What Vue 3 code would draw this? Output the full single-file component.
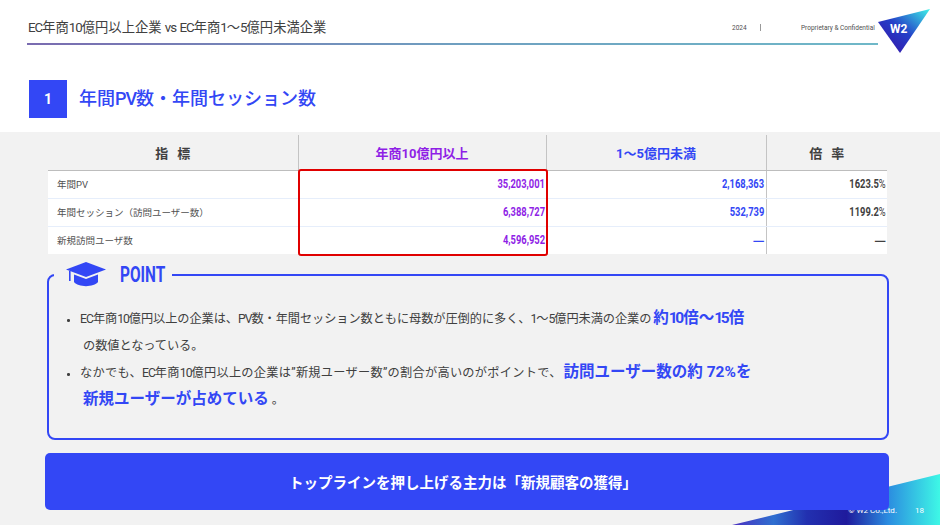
<script setup>
const rows = [
  { label: '年間PV', a: '35,203,001', b: '2,168,363', c: '1623.5', unit: '%' },
  { label: '年間セッション（訪問ユーザー数）', a: '6,388,727', b: '532,739', c: '1199.2', unit: '%' },
  { label: '新規訪問ユーザ数', a: '4,596,952', b: '—', c: '—', unit: '' }
]
const numClass = (v) => (v === '—' ? 'dash' : 'sq')
</script>

<template>
  <div class="slide">
    <header class="topbar">
      <div class="topbar-line">
        <h1 class="doc-title"><span class="lat">EC</span>年商<span class="lat">10</span>億円以上企業 <span class="lat">vs</span> <span class="lat">EC</span>年商<span class="lat">1</span>〜<span class="lat">5</span>億円未満企業</h1>
        <div class="meta">
          <span class="year">2024</span>
          <span class="sep"></span>
          <span class="conf">Proprietary &amp; Confidential</span>
        </div>
      </div>
      <svg class="logo" width="54" height="46" viewBox="0 0 54 46">
        <defs>
          <linearGradient id="lg" x1="0" y1="1" x2="1" y2="0">
            <stop offset="0" stop-color="#3a0ca3" />
            <stop offset="0.5" stop-color="#2440c8" />
            <stop offset="1" stop-color="#3ef3e8" />
          </linearGradient>
        </defs>
        <polygon points="0,13 52,0 22,44" fill="url(#lg)" />
        <text x="12" y="24" class="logo-text">W2</text>
      </svg>
    </header>

    <section class="heading">
      <div class="num">1</div>
      <h2 class="heading-text">年間<span class="lat">PV</span>数・年間セッション数</h2>
    </section>

    <main class="panel">
      <svg class="swoosh" width="220" height="70" viewBox="0 0 220 70" preserveAspectRatio="none">
        <defs>
          <linearGradient id="sw" x1="0" y1="0" x2="1" y2="0">
            <stop offset="0" stop-color="#4b2fc0" />
            <stop offset="0.2" stop-color="#2f6fd0" />
            <stop offset="0.36" stop-color="#2230b0" />
            <stop offset="0.55" stop-color="#1f1a9c" />
            <stop offset="0.75" stop-color="#2b8ce0" />
            <stop offset="1" stop-color="#3ef8e6" />
          </linearGradient>
        </defs>
        <polygon points="12,70 220,19 220,70" fill="url(#sw)" />
      </svg>
      <div class="foot">
        <span class="copy">© W2 Co.,Ltd.</span>
        <span class="page">18</span>
      </div>

      <table class="data">
        <colgroup>
          <col class="c1" /><col class="c2" /><col class="c3" /><col class="c4" />
        </colgroup>
        <thead>
          <tr>
            <th class="gray">指 標</th>
            <th class="purple">年商10億円以上</th>
            <th class="blue">1〜5億円未満</th>
            <th class="gray">倍 率</th>
          </tr>
        </thead>
        <tbody>
          <tr v-for="r in rows" :key="r.label">
            <td class="lbl">{{ r.label }}</td>
            <td class="n purple"><span class="sq">{{ r.a }}</span></td>
            <td class="n blue"><span :class="numClass(r.b)">{{ r.b }}</span></td>
            <td class="n dark"><span :class="numClass(r.c)">{{ r.c }}<span class="unit">{{ r.unit }}</span></span></td>
          </tr>
        </tbody>
      </table>
      <div class="redbox"></div>

      <div class="point">
        <div class="point-head">
          <svg width="42" height="26" viewBox="0 0 42 26">
            <path d="M21 1 L41 8.5 L21 16 L1 8.5 Z" fill="#3347f5" />
            <path d="M9 13.5 L21 18 L33 13.5 V21 C29 26.5 13 26.5 9 21 Z" fill="#3347f5" />
            <rect x="4" y="10" width="1.6" height="10" fill="#3347f5" />
          </svg>
          <span class="point-title"><span class="pt-in">POINT</span></span>
        </div>
        <ul class="points">
          <li>
            <div class="ln"><span class="lat">EC</span>年商<span class="lat">10</span>億円以上の企業は、<span class="lat">PV</span>数・年間セッション数ともに母数が圧倒的に多く、<span class="lat">1</span>〜<span class="lat">5</span>億円未満の企業の<b class="em">約<span class="lat2">10</span>倍〜<span class="lat2">15</span>倍</b></div>
            <div class="ln cont">の数値となっている。</div>
          </li>
          <li>
            <div class="ln loose">なかでも、<span class="lat">EC</span>年商<span class="lat">10</span>億円以上の企業は”新規ユーザー数”の割合が高いのがポイントで、<b class="em">訪問ユーザー数の約 72%を</b></div>
            <div class="ln cont"><b class="em">新規ユーザーが占めている</b> 。</div>
          </li>
        </ul>
      </div>

      <div class="cta">トップラインを押し上げる主力は「新規顧客の獲得」</div>
    </main>
  </div>
</template>

<style scoped>
.slide {
  width: 940px;
  height: 525px;
  overflow: hidden;
  background: #fff;
  display: flex;
  flex-direction: column;
  font-family: Roboto, "Noto Sans CJK JP", sans-serif;
  color: #404040;
}
.lat { letter-spacing: -1px; }
.lat2 { letter-spacing: -2.4px; margin-right: 1.5px; }
.topbar {
  height: 56px;
  padding: 0 10px 0 27px;
  display: flex;
  position: relative;
}
.topbar-line {
  width: 851px;
  height: 45px;
  border-bottom: 2px solid;
  border-image: linear-gradient(90deg, #7a6bb0, #6f9fc0 50%, #6fb8c8) 1;
  display: flex;
  justify-content: space-between;
  align-items: center;
  padding-top: 9px;
  box-sizing: border-box;
}
.doc-title {
  margin: 0;
  font-size: 13.3px;
  font-weight: 400;
  color: #404040;
  padding-left: 1px;
}
.meta {
  display: flex;
  align-items: center;
  font-size: 6.5px;
  color: #505050;
  padding-right: 5px;
  padding-top: 3px;
}
.year { width: 28px; }
.sep { width: 1px; height: 7px; background: #999; margin-right: 40px; }
.conf { width: 72px; white-space: nowrap; }
.logo { position: absolute; left: 878px; top: 9px; }
.logo-text { font: 700 12px Roboto, sans-serif; fill: #fff; }
.heading {
  height: 76px;
  padding: 24px 0 0 29px;
  box-sizing: border-box;
  display: flex;
  gap: 12px;
}
.num {
  width: 38px;
  height: 38px;
  background: #3347f5;
  color: #fff;
  font-weight: 700;
  font-size: 14px;
  display: flex;
  align-items: center;
  justify-content: center;
}
.heading-text {
  margin: 0;
  font-size: 18px;
  line-height: 38px;
  font-weight: 500;
  color: #3347f5;
}
.panel {
  flex: 1;
  background: #f2f2f2;
  padding: 3px 51px 0 45px;
  position: relative;
  display: flex;
  flex-direction: column;
}
.swoosh { position: absolute; right: 0; bottom: 0; }
.foot {
  position: absolute;
  right: 16px;
  bottom: 10px;
  display: flex;
  gap: 18px;
  font-size: 8px;
  color: #fff;
}
.data {
  width: 839px;
  margin-left: 3px;
  border-collapse: collapse;
  table-layout: fixed;
  font-size: 9.5px;
  position: relative;
}
.c1 { width: 250px; }
.c2 { width: 248px; }
.c3 { width: 220px; }
.c4 { width: 121px; }
th {
  height: 35px;
  padding: 0;
  font-size: 13px;
  font-weight: 700;
  background: #f2f2f2;
  border-bottom: 1px solid #bdbdbd;
  border-right: 1px solid #c4c4c4;
}
th:last-child { border-right: 0; }
th.gray { color: #404040; word-spacing: 6px; }
td {
  height: 27.8px;
  padding: 0 1px 1px 9px;
  background: #fff;
  border-bottom: 1px solid #e6eefb;
  box-sizing: border-box;
}
tr:last-child td { border-bottom: 0; }
.lbl { color: #505050; }
.n {
  text-align: right;
  font-weight: 700;
  font-size: 12px;
}
.sq {
  display: inline-block;
  transform: scaleX(0.78);
  transform-origin: right center;
}
.purple { color: #8f1fe6; }
.blue { color: #3347f5; }
.dark { color: #404040; }
.unit { font-weight: 400; }
.dash { font-family: "Noto Sans CJK JP", sans-serif; font-size: 13px; }
td:nth-child(3) { border-right: 1px solid #c4c4c4; }
.redbox {
  position: absolute;
  left: 298px;
  top: 37px;
  width: 250px;
  height: 86.5px;
  box-sizing: border-box;
  border: 2.5px solid #e00000;
  border-radius: 3px;
}
.point {
  margin-top: 20.4px;
  margin-left: 2px;
  width: 842px;
  height: 166px;
  box-sizing: border-box;
  border: 2.5px solid #3347f5;
  border-radius: 8px;
  position: relative;
  padding: 30px 0 0 17px;
}
.point-head {
  position: absolute;
  left: 5px;
  top: -15px;
  padding: 0 8px 0 11px;
  height: 26px;
  background: #f2f2f2;
  display: flex;
  align-items: center;
  gap: 13px;
}
.point-title {
  width: 44px;
  font-size: 22px;
  font-weight: 700;
  color: #3347f5;
}
.pt-in {
  display: inline-block;
  transform: scaleX(0.7);
  transform-origin: left center;
}
.points { margin: 0; padding: 0; list-style: none; font-size: 12.2px; color: #404040; }
.points li { position: relative; padding-left: 14px; }
.points li::before {
  content: "";
  position: absolute;
  left: 1px;
  top: 13px;
  width: 2.5px;
  height: 2.5px;
  border-radius: 50%;
  background: #404040;
}
.ln { line-height: 27px; white-space: nowrap; letter-spacing: -0.06px; }
.loose { letter-spacing: 0.28px; }
.cont { padding-left: 3px; }
.em { color: #3347f5; font-size: 15.5px; font-weight: 700; letter-spacing: 0; line-height: 1; margin-left: 2px; }
.cont .em { margin-left: 0; }
.cta {
  margin-top: 13px;
  width: 844px;
  height: 57px;
  padding-right: 8px;
  box-sizing: border-box;
  background: #3347f5;
  border-radius: 5px;
  color: #fff;
  font-weight: 700;
  font-size: 14.5px;
  display: flex;
  align-items: center;
  justify-content: center;
  position: relative;
}
</style>
